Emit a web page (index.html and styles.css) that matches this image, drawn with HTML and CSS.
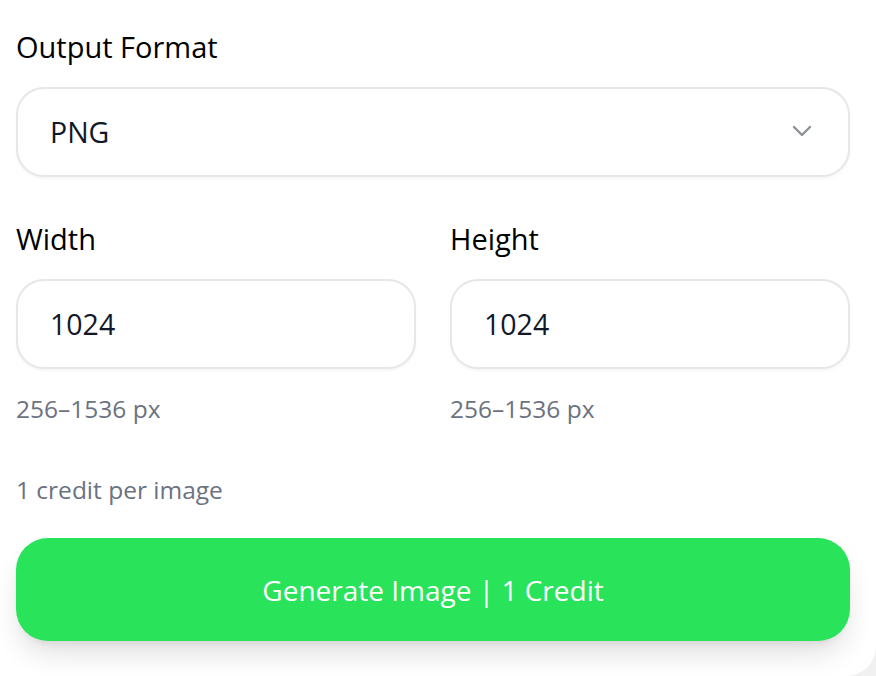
FILE: index.html
```html
<!DOCTYPE html>
<html lang="en">

<head>
    <meta charset="UTF-8">
    <meta name="viewport" content="width=device-width, initial-scale=1.0">
    <title>Generate Image</title>
    <link rel="stylesheet" href="styles.css">
</head>

<body>
    <div class="card">
        <div class="field">
            <label class="label" for="format">Output Format</label>
            <div class="select-wrap">
                <select id="format" class="select">
                    <option>PNG</option>
                    <option>JPEG</option>
                    <option>WEBP</option>
                </select>
                <svg class="chevron" width="20" height="12" viewBox="0 0 20 12" fill="none">
                    <path d="M2 2l8 8 8-8" stroke="#8e9198" stroke-width="2.4" stroke-linecap="round" stroke-linejoin="round"/>
                </svg>
            </div>
        </div>

        <div class="size-row">
            <div class="field">
                <label class="label" for="width">Width</label>
                <input id="width" class="input" type="text" value="1024">
                <div class="hint">256–1536 px</div>
            </div>
            <div class="field">
                <label class="label" for="height">Height</label>
                <input id="height" class="input" type="text" value="1024">
                <div class="hint">256–1536 px</div>
            </div>
        </div>

        <p class="note">1 credit per image</p>

        <button class="generate">Generate Image | 1 Credit</button>
    </div>
</body>

</html>
```

FILE: styles.css
```css
body {
    margin: 0;
    font-family: "Open Sans", "Noto Sans", sans-serif;
    background-color: #f1f1f2;
}

.card {
    background-color: white;
    padding: 27px 26px 35px 16px;
    border-bottom-right-radius: 30px;
}

.field {
    display: flex;
    flex-direction: column;
}

.label {
    font-size: 29px;
    line-height: 40px;
    color: #000;
    margin-bottom: 20px;
}

.select-wrap {
    position: relative;
}

.select,
.input {
    box-sizing: border-box;
    width: 100%;
    height: 90px;
    padding: 0 32px;
    border: 2px solid #e6e6eb;
    border-radius: 28px;
    background-color: white;
    box-shadow: 0 2px 3px rgba(0, 0, 0, 0.04);
    font-family: inherit;
    font-size: 28.5px;
    color: #111827;
    outline: none;
}

.select {
    appearance: none;
    -webkit-appearance: none;
}

.chevron {
    position: absolute;
    right: 38px;
    top: 38px;
    pointer-events: none;
}

.size-row {
    display: grid;
    grid-template-columns: 1fr 1fr;
    gap: 34px;
    margin-top: 42px;
}

.hint {
    font-size: 24.5px;
    line-height: 36px;
    color: #6b7280;
    margin-top: 22px;
}

.note {
    font-size: 24.5px;
    line-height: 36px;
    color: #6b7280;
    margin: 45px 0 30px;
}

.generate {
    display: block;
    width: 100%;
    height: 103px;
    border: none;
    border-radius: 32px;
    background-color: #29e35a;
    color: white;
    font-family: inherit;
    font-size: 28px;
    cursor: pointer;
    box-shadow: 0 16px 30px -6px rgba(0, 0, 0, 0.14), 0 6px 10px -6px rgba(0, 0, 0, 0.1);
}
```
